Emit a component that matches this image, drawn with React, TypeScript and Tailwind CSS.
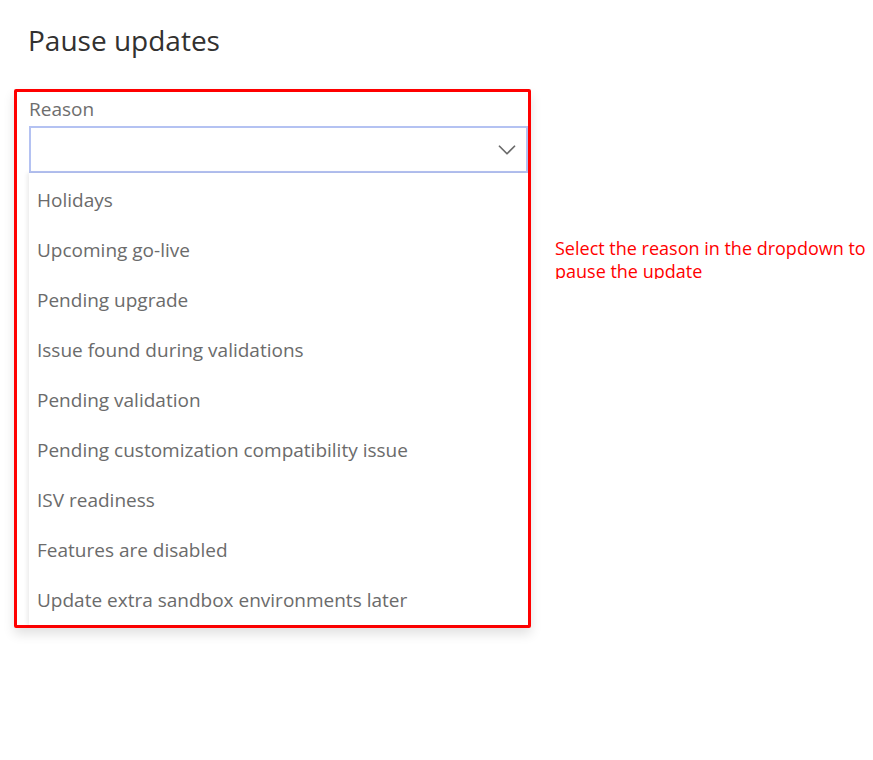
import { ChevronDown } from 'lucide-react';

const reasons = [
    'Holidays',
    'Upcoming go-live',
    'Pending upgrade',
    'Issue found during validations',
    'Pending validation',
    'Pending customization compatibility issue',
    'ISV readiness',
    'Features are disabled',
    'Update extra sandbox environments later',
];

export default function App() {
    return (
        <div className="min-h-screen w-[873px] h-[760px] bg-white font-['Open_Sans',sans-serif] overflow-hidden">
            <div className="flex pt-[22px]">
                <div className="pl-[14px] w-[540px] shrink-0">
                    <h1 className="pl-[14px] text-[28px] leading-[36px] text-[#323130] font-normal mb-[31px]">Pause updates</h1>

                    <div className="w-[517px] border-[3px] border-[#ff0000] rounded-[2px] shadow-[0_6px_12px_rgba(0,0,0,0.12)] pl-[12px]">
                        <label className="block text-[19px] leading-[24px] text-[#6e6e6e] pt-[5px] mb-[5px]">Reason</label>
                        <div className="h-[47px] border-2 border-[#b4c2f2] flex items-center justify-end pr-[4px]">
                            <ChevronDown size={30} strokeWidth={1.4} className="text-[#6a6a6a]" />
                        </div>
                        <ul className="pt-[2px] shadow-[-2px_0_4px_rgba(0,0,0,0.08)]">
                            {reasons.map((r) => (
                                <li key={r} className="h-[50px] flex items-center pl-[8px] text-[19px] text-[#6b6b6b]">
                                    {r}
                                </li>
                            ))}
                        </ul>
                    </div>
                </div>

                <div className="pl-[15px] pt-[215px]">
                    <p className="h-[42px] overflow-hidden text-[18px] leading-[23px] text-[#ff0000] w-[318px]">
                        Select the reason in the dropdown to pause the update
                    </p>
                </div>
            </div>
        </div>
    );
}
